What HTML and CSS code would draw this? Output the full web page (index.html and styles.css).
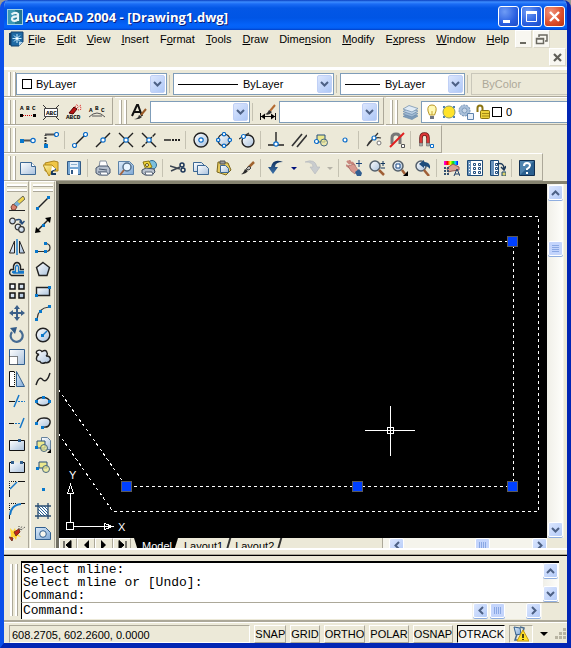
FILE: index.html
```html
<!DOCTYPE html>
<html lang="en">
<head>
<meta charset="utf-8">
<title>AutoCAD 2004 - [Drawing1.dwg]</title>
<link rel="stylesheet" href="styles.css">
</head>
<body>
<svg class="sprite" aria-hidden="true">
  <defs>
    <linearGradient id="ice" x1="0" y1="0" x2="1" y2="1"><stop offset="0" stop-color="#fff"/><stop offset="1" stop-color="#a9c1dc"/></linearGradient>
    <linearGradient id="sky" x1="0" y1="0" x2="1" y2="1"><stop offset="0" stop-color="#dcebfa"/><stop offset="1" stop-color="#7fa8d4"/></linearGradient>
    <linearGradient id="gold" x1="0" y1="0" x2="1" y2="1"><stop offset="0" stop-color="#fff6a8"/><stop offset="1" stop-color="#d8a820"/></linearGradient>
    <linearGradient id="navy" x1="0" y1="0" x2="0" y2="1"><stop offset="0" stop-color="#0f2f5c"/><stop offset="1" stop-color="#3d74ac"/></linearGradient>
    <linearGradient id="rainbow"><stop offset="0" stop-color="#f0f"/><stop offset=".25" stop-color="#f00"/><stop offset=".45" stop-color="#ff0"/><stop offset=".65" stop-color="#0d0"/><stop offset=".8" stop-color="#0df"/><stop offset="1" stop-color="#00f"/></linearGradient>
  </defs>
  <symbol id="down" viewBox="0 0 9 6"><path d="M1 1l3.5 3.500L8 1" fill="none" stroke="#4d6185" stroke-width="2"/></symbol>
  <symbol id="up" viewBox="0 0 9 6"><path d="M1 5l3.500-3.500L8 5" fill="none" stroke="#4d6185" stroke-width="2"/></symbol>
  <symbol id="left" viewBox="0 0 6 9"><path d="M5 1L1.500 4.500 5 8" fill="none" stroke="#4d6185" stroke-width="2"/></symbol>
  <symbol id="right" viewBox="0 0 6 9"><path d="M1 1l3.500 3.500L1 8" fill="none" stroke="#4d6185" stroke-width="2"/></symbol>

  <symbol id="app" viewBox="0 0 16 16"><rect width="16" height="16" fill="#9fd0e4"/><rect x="1" y="1" width="14" height="14" fill="#23768f"/><path d="M1 1h7v14H1z" fill="#3c98b4"/><path d="M4.500 5.500Q8 2.500 11 5v7M11 7.500Q4.500 7 5 10.500 6.500 13.500 11 10.500" fill="none" stroke="#e8f4f8" stroke-width="2.200"/></symbol>
  <symbol id="doc" viewBox="0 0 16 16"><path d="M1 2h3v12H1z" fill="#17395f"/><path d="M3 1h12v10l-4 4H3z" fill="#1f6aa5" stroke="#14406c"/><path d="M9 3v9M4.500 7.500h9M6 4.500l6 6M12 4.500l-6 6" stroke="#c8ecff"/><path d="M8 6.500h2v2H8z" fill="#fff"/><path d="M11 15v-4h4z" fill="#b8d8ee"/></symbol>

  <symbol id="text-style" viewBox="0 0 16 16"><path d="M1 12L6 1h1l4 11M3 8h6" fill="none" stroke="#111" stroke-width="2"/><path d="M15 5l-5 6" stroke="#9a5a28" stroke-width="2"/><path d="M3 15q4 0 5-4l3 2q-3 3-8 2z" fill="#333"/></symbol>
  <symbol id="dim-style" viewBox="0 0 16 16"><path d="M.5 9v7M15.500 9v7M1 12.500h14" stroke="#111"/><path d="M1 12.500l4-3v6zM15 12.500l-4-3v6z"/><path d="M15 1l-5 6" stroke="#b46a30" stroke-width="2"/><path d="M5 10q2 0 4-4l3 2q-3 4-7 2z" fill="#333"/></symbol>
  <symbol id="layers" viewBox="0 0 16 16"><g stroke="#6a89aa" stroke-width=".7"><path d="M7 9l9 3-6 3.500-9-3z" fill="#7d9cba"/><path d="M7 6.500l9 3-6 3.500-9-3z" fill="#a0bad3"/><path d="M7 4l9 3-6 3.500-9-3z" fill="#bfd3e6"/><path d="M7 1.500l9 3L10 8 1 5z" fill="#e0ebf5"/></g></symbol>
  <symbol id="bulb" viewBox="0 0 16 16"><path d="M5.500 11L4 7q-1-6 4-6t4 6l-1.500 4z" fill="#fff9b4" stroke="#b99624"/><path d="M6 12h4v3H6z" fill="#6e7482"/><path d="M8 11V7" stroke="#c9a835"/></symbol>
  <symbol id="sun" viewBox="0 0 16 16"><path d="M2 2h2v2H2zM12 2h2v2h-2zM2 12h2v2H2zM12 12h2v2h-2z" fill="#4a7fb8"/><circle cx="8" cy="8" r="6" fill="#ffe32a" stroke="#8e9a66"/></symbol>
  <symbol id="sun-vp" viewBox="0 0 16 16"><circle cx="6.500" cy="6.500" r="5.500" fill="#a9c0da" stroke="#6f90b5" stroke-dasharray="2 1"/><circle cx="6.500" cy="6.500" r="2.500" fill="#c6d6e8" stroke="#7f9cbc"/><path d="M9.500 9.500h6v6h-6z" fill="#e6eef8" stroke="#5d82ad"/></symbol>
  <symbol id="lock" viewBox="0 0 16 16"><path d="M2.500 8V4q0-2.500 2.500-2.500T7.500 4v3" fill="none" stroke="#8b7410" stroke-width="2"/><rect x="5.500" y="6.500" width="9" height="8" rx="1" fill="#edd139" stroke="#8b7410"/><path d="M7 9.500h7M7 12h7" stroke="#a48a16"/></symbol>

  <symbol id="track-point" viewBox="0 0 16 16"><path d="M2 8.500h9" stroke="#555" stroke-width="2"/><path d="M0 7h4v4H0z" class="blue"/><circle cx="13" cy="8.500" r="2.200" class="ring"/></symbol>
  <symbol id="snap-from" viewBox="0 0 16 16"><path d="M2.500 13V3" stroke="#333" stroke-width="2" stroke-dasharray="2 1"/><path d="M2 2.500h11" stroke="#555" stroke-width="2"/><path d="M1 12h4v4H1z" class="blue"/><circle cx="13.500" cy="2.500" r="2" class="ring"/></symbol>
  <symbol id="endpoint" viewBox="0 0 16 16"><path d="M3 13L13 3" class="ink"/><circle cx="13.500" cy="2.500" r="2" class="ring"/><circle cx="2.500" cy="13.500" r="2" class="ring"/></symbol>
  <symbol id="midpoint" viewBox="0 0 16 16"><path d="M1 15L15 1" class="ink"/><circle cx="8" cy="8" r="2.200" class="ring"/></symbol>
  <symbol id="intersect" viewBox="0 0 16 16"><path d="M1 1l14 14M1 15L15 1" class="ink"/><circle cx="8" cy="8" r="2.200" class="ring"/></symbol>
  <symbol id="apparent" viewBox="0 0 16 16"><path d="M1 1l14 14" class="ink"/><path d="M1 15L15 1" class="ink" stroke-dasharray="4 1"/><circle cx="8" cy="8" r="2.200" class="ring"/></symbol>
  <symbol id="extension" viewBox="0 0 16 16"><path d="M0 8h7" stroke="#222" stroke-width="1.500"/><path d="M8 8h8" stroke="#222" stroke-width="2" stroke-dasharray="2 1"/></symbol>
  <symbol id="center" viewBox="0 0 16 16"><circle cx="8" cy="8" r="7" fill="url(#ice)" class="ink"/><circle cx="8" cy="8" r="2.200" class="ring"/></symbol>
  <symbol id="quadrant" viewBox="0 0 16 16"><circle cx="8" cy="8" r="6" fill="url(#ice)" class="edge"/><g class="ring"><circle cx="8" cy="2.200" r="1.700"/><circle cx="8" cy="13.800" r="1.700"/><circle cx="2.200" cy="8" r="1.700"/><circle cx="13.800" cy="8" r="1.700"/></g></symbol>
  <symbol id="tangent" viewBox="0 0 16 16"><circle cx="9" cy="9" r="6" fill="url(#ice)" class="ink"/><path d="M0 7L10 1" class="edge"/><circle cx="4.500" cy="4.500" r="2" class="ring"/></symbol>
  <symbol id="perpendicular" viewBox="0 0 16 16"><path d="M8 0v10M0 13h16" class="ink"/><circle cx="8" cy="12" r="2.200" class="ring"/></symbol>
  <symbol id="parallel" viewBox="0 0 16 16"><path d="M1 14L11 2M6 15L16 3" stroke="#333" stroke-width="1.700"/></symbol>
  <symbol id="insert-snap" viewBox="0 0 16 16"><path d="M3 3h8v7H3z" fill="#ece88c" stroke="#264f7c"/><circle cx="10" cy="10.500" r="3.500" fill="#e9e596" fill-opacity=".7" stroke="#46677f"/><circle cx="2.500" cy="9.500" r="2" class="ring"/></symbol>
  <symbol id="node" viewBox="0 0 16 16"><circle cx="8" cy="8" r="2" class="ring"/></symbol>
  <symbol id="nearest" viewBox="0 0 16 16"><path d="M1 14L12 1M1 14q5-10 14-8" fill="none" class="edge"/><circle cx="8" cy="6" r="2" class="ring"/><circle cx="13" cy="11" r="2" fill="#fff" stroke="#777"/></symbol>
  <symbol id="snap-none" viewBox="0 0 16 16"><path d="M3 12V6q0-4 4-4t4 4v6" fill="none" stroke="#777" stroke-width="3"/><path d="M1 15L15 1" stroke="#e02020" stroke-width="2"/><path d="M12.500 12.500h3v3h-3z" fill="#fff" stroke="#555"/></symbol>
  <symbol id="magnet" viewBox="0 0 16 16"><path d="M3 11V6q0-4 3.500-4T10 6v5" fill="none" stroke="#651515" stroke-width="3.500"/><path d="M3 11V6q0-4 3.500-4T10 6v5" fill="none" stroke="#db3636" stroke-width="2"/><path d="M1.500 11h3v3h-3zM8.500 11h3v3h-3z" fill="#aaa" stroke="#555" stroke-width=".5"/><path d="M12.500 12.500h3v3h-3z" fill="#fff" stroke="#0a6cc8"/></symbol>

  <symbol id="new" viewBox="0 0 16 16"><path d="M.5 2.500h11l4 4v8H.5z" fill="url(#ice)" stroke="#3c6894"/><path d="M11.500 2.500v4h4" fill="#fff" stroke="#3c6894"/></symbol>
  <symbol id="open" viewBox="0 0 16 16"><path d="M2 3l9-2 4 1v9H2z" fill="#f0c645" stroke="#ad851d"/><path d="M0 5h9l3 3-6 8z" fill="url(#gold)" stroke="#b28a1d"/><path d="M13 14H9q-1-4 4-5" fill="none" stroke="#12365e" stroke-width="2"/><path d="M9 6l4 3-5 2z" fill="#fff"/></symbol>
  <symbol id="save" viewBox="0 0 16 16"><path d="M1.500 1.500h13v13h-13z" fill="#77a8d4" stroke="#315a86"/><path d="M4 2h8v5H4z" fill="#e8f1f9"/><path d="M5 4.500h6" stroke="#8fb2d0"/><path d="M4 9h8v6H4z" fill="#fff"/><path d="M5 10h2v4H5z" fill="#315a86"/></symbol>
  <symbol id="print" viewBox="0 0 16 16"><path d="M4 7l1-6h6l2 6z" fill="#fff" stroke="#8792a0"/><path d="M1 8l3-2h9l2 3v4l-3 2H4l-3-2z" fill="#b5bfcd" stroke="#47556a"/><path d="M4 9l8 1M3 12h9" stroke="#47556a"/><path d="M5 12h7l1 3H6z" fill="#fff" stroke="#6d7a8d"/></symbol>
  <symbol id="preview" viewBox="0 0 16 16"><path d="M.5 1.500h11l4 4v9H.5z" fill="url(#sky)" stroke="#5b82a8"/><circle cx="9" cy="7" r="4" fill="#e9f5ff" stroke="#526f8b" stroke-width="1.500"/><path d="M6 10l-4 5" stroke="#a26440" stroke-width="2"/></symbol>
  <symbol id="publish" viewBox="0 0 16 16"><circle cx="11" cy="5" r="4.500" fill="#7cc0dd" stroke="#2f6b94"/><path d="M2 2l6-1 3 6-6 3z" fill="#f4d83a" stroke="#8a7612"/><circle cx="6" cy="5" r="1.500" fill="#fff" stroke="#665500"/><path d="M1 10l4-2 8 1 1 3-3 3H4l-3-2z" fill="#b9c2ce" stroke="#434f60"/><path d="M4 12h7l1 3H5z" fill="#fff" stroke="#5c6878"/></symbol>
  <symbol id="cut" viewBox="0 0 16 16"><path d="M0 6l10 3M1 11l9-4" stroke="#3c4550" stroke-width="1.500"/><g fill="none" stroke="#1b3557" stroke-width="1.500"><circle cx="12" cy="5" r="2"/><circle cx="13" cy="10" r="2"/></g></symbol>
  <symbol id="copy" viewBox="0 0 16 16"><path d="M.5 2.500h8l3 3v6H.5z" fill="url(#ice)" stroke="#3c6894"/><path d="M4.500 5.500h8l3 3v6h-11z" fill="url(#ice)" stroke="#3c6894"/></symbol>
  <symbol id="paste" viewBox="0 0 16 16"><path d="M2 2l10 1 3 7-5 5-9-3z" fill="#e4c95e" stroke="#7a661c"/><path d="M4 1h5v3H4z" fill="#999" stroke="#555"/><path d="M4.500 5.500h5l3 3v4h-8z" fill="url(#ice)" stroke="#3c6894"/></symbol>
  <symbol id="match" viewBox="0 0 16 16"><path d="M15 2L9 8" stroke="#a0632f" stroke-width="2.500"/><path d="M10 6l2 2-2 2-3-1z" fill="#bbb" stroke="#444"/><path d="M2 14q2 0 4-5l3 2q-3 4-7 3z" fill="#2a2a2a"/></symbol>
  <symbol id="undo" viewBox="0 0 16 16"><path d="M15 2Q5-2 3 7H0l5 7 5-7H7q0-5 8-5z" fill="url(#navy)"/></symbol>
  <symbol id="redo" viewBox="0 0 16 16"><path d="M1 2q10-4 12 5h3l-5 7-5-7h3q0-5-8-5z" fill="#c9ccce" stroke="#aeb3b8" stroke-width=".5"/></symbol>
  <symbol id="pan" viewBox="0 0 16 16"><path d="M1 1l3 3M3 0l3 4M0 5l4 3M6 2l3 4" stroke="#c8877d" stroke-width="2"/><path d="M2 6l6-2 4 6-3 4-4-3z" fill="#d89a90" stroke="#9b5d58" stroke-width=".6"/><path d="M9 12l4-3 3 4-1 3h-4z" fill="#315e90"/><path d="M13 0v7M10 3.500h6" stroke="#1e477a"/></symbol>
  <symbol id="zoom-rt" viewBox="0 0 16 16"><circle cx="6" cy="6" r="5" fill="url(#ice)" stroke="#54606b" stroke-width="1.500"/><path d="M10 10l5 5" stroke="#a05f36" stroke-width="2.500"/><path d="M14 1v5M11.500 3.500H16M11.500 8H16" stroke="#12365e"/></symbol>
  <symbol id="zoom-win" viewBox="0 0 16 16"><circle cx="6" cy="6" r="5" fill="url(#ice)" stroke="#54606b" stroke-width="1.500"/><path d="M4 4h4v4H4z" fill="#fff" stroke="#1a4b86"/><path d="M10 10l3 4" stroke="#a05f36" stroke-width="2.500"/><path d="M16 11v5h-5z"/></symbol>
  <symbol id="zoom-prev" viewBox="0 0 16 16"><circle cx="6" cy="6" r="5" fill="url(#ice)" stroke="#54606b" stroke-width="1.500"/><path d="M9 10l5 6" stroke="#a05f36" stroke-width="2.500"/><path d="M15 9q1-7-6-7V0L4 4l5 4V6q4 0 6 3z" fill="#1d4c7c"/></symbol>
  <symbol id="properties" viewBox="0 0 16 16"><path d="M0 1h14v4H0z" fill="url(#rainbow)"/><path d="M3 8l6-4 6 3v3l-7 1-4 1z" fill="#d7a091" stroke="#94564d"/><path d="M0 8h6M0 11h6M0 14h6" stroke="#34506f" stroke-width="2" stroke-dasharray="2 1"/><path d="M10 16l3-7 3 7M11 14h4" fill="none" stroke="#1e3c66"/></symbol>
  <symbol id="design" viewBox="0 0 16 16"><path d="M.5.5h15v15H.5z" fill="#fff" stroke="#1d4a78"/><path d="M1 1h3v14H1z" fill="#6992bb"/><path d="M2.500 3v11" stroke="#fff" stroke-dasharray="1 2"/><g fill="#fff" stroke="#204c7c"><path d="M6.500 3.500h2v2h-2zM11.500 3.500h2v2h-2zM6.500 7.500h2v2h-2zM11.500 7.500h2v2h-2zM6.500 11.500h2v2h-2zM11.500 11.500h2v2h-2z"/></g></symbol>
  <symbol id="palettes" viewBox="0 0 16 16"><path d="M.5.5h8v15h-8z" fill="#fff" stroke="#1d4a78"/><path d="M1 1h3v14H1z" fill="#6992bb"/><path d="M5.500 3.500h2v2h-2zM5.500 7.500h2v2h-2zM5.500 11.500h2v2h-2z" fill="#fff" stroke="#204c7c"/><path d="M7 4q7-2 7 5M11 7l3 3 2-4" fill="none" stroke="#1d3959" stroke-width="1.500"/><path d="M12 12h4v4h-4z" fill="#ddd36c" stroke="#1d4a78"/></symbol>
  <symbol id="help" viewBox="0 0 16 16"><path d="M.5.5h15v15H.5z" fill="#2b608f" stroke="#102f51"/><path d="M1 1h14L1 15z" fill="#4f83ae"/><path d="M5 6q0-3 3-3t3 2.500Q11 7 8 9v1" fill="none" stroke="#fff" stroke-width="2"/><path d="M7 12h2v2H7z" fill="#fff"/></symbol>

  <symbol id="erase" viewBox="0 0 16 16"><path d="M14 1l2 3-8 7-3-2z" fill="#f0d44b" stroke="#665"/><path d="M8 6l3 3-3 3-3-3z" fill="#7aafd4"/><path d="M4 9l4 3-2 3H3l-1-3z" fill="#dc806b" stroke="#7b4434"/><path d="M0 15.500h16" stroke="#222"/></symbol>
  <symbol id="copy-obj" viewBox="0 0 16 16"><g fill="url(#ice)" class="edge"><circle cx="3.500" cy="4" r="2.800"/><circle cx="9" cy="10" r="2.800"/><circle cx="12.500" cy="12.500" r="2.800"/></g><path d="M7 3q5-2 6 3M10.500 4.500L13 7l2.500-3" fill="none" stroke="#264b7a" stroke-width="1.500"/></symbol>
  <symbol id="mirror" viewBox="0 0 16 16"><path d="M5.500 2v12H.5zM10.500 2v12h5z" fill="url(#ice)" stroke="#222"/><path d="M8 0v16" stroke="#1577c8" stroke-width="1.400"/></symbol>
  <symbol id="offset" viewBox="0 0 16 16"><path d="M15 14.500H2.500Q-1 12 2 8.500h2.500V5Q5.500 1.500 8 1.500T11.500 5v3.500H15" fill="none" class="ink"/><path d="M15 12H4.500q-2-1 0-1.500h2V6Q8 2.500 9.500 6v4.500H15" fill="none" stroke="#1577c8" stroke-width="1.300"/></symbol>
  <symbol id="array" viewBox="0 0 16 16"><path d="M1 1h5v5H1zM10 1h5v5h-5zM1 10h5v5H1zM10 10h5v5h-5z" fill="url(#ice)" stroke="#111" stroke-width="1.500"/></symbol>
  <symbol id="move" viewBox="0 0 16 16"><path d="M8 0l3 4H9v3h3V5l4 3-4 3V9H9v3h2l-3 4-3-4h2V9H4v2L0 8l4-3v2h3V4H5z" fill="#3b5f88"/></symbol>
  <symbol id="rotate" viewBox="0 0 16 16"><path d="M10.500 3.500A6 6 0 1 1 3 5" fill="none" stroke="#466b92" stroke-width="2.200"/><path d="M1 1l7-1-2 7z" fill="#315a86"/></symbol>
  <symbol id="scale" viewBox="0 0 16 16"><path d="M.5.500h15v15H.5z" fill="url(#ice)" stroke="#315f8f"/><path d="M.5 7.500h8v8h-8z" fill="#fff" stroke="#111" stroke-dasharray="1 1"/></symbol>
  <symbol id="stretch" viewBox="0 0 16 16"><path d="M7.500.500l8 15h-8z" fill="url(#sky)" stroke="#315f8f"/><path d="M5.500.500h-5v15h5" fill="#fff" stroke="#111"/><path d="M5.500 1v15" stroke="#111" stroke-dasharray="1 1"/></symbol>
  <symbol id="trim" viewBox="0 0 16 16"><path d="M0 8.500h6" stroke="#111"/><path d="M9 8.500h7" stroke="#1577c8" stroke-dasharray="2 1"/><path d="M5 14l5-12" stroke="#1577c8" stroke-width="1.500"/></symbol>
  <symbol id="extend" viewBox="0 0 16 16"><path d="M0 8.500h5" stroke="#111"/><path d="M6 8.500h6" stroke="#1577c8" stroke-dasharray="2 1"/><path d="M11 13l4-10" stroke="#1577c8" stroke-width="1.500"/></symbol>
  <symbol id="break-pt" viewBox="0 0 16 16"><path d="M.5 3.500h15v10H.5z" fill="url(#ice)" stroke="#111"/><path d="M9 2h3v3H9z" fill="#315f8f"/></symbol>
  <symbol id="break" viewBox="0 0 16 16"><path d="M.5 3.500h15v10H.5z" fill="url(#ice)"/><path d="M3 3.500H.5v10h15v-10H13" fill="none" stroke="#111"/><path d="M2 2h3v3H2zM11 2h3v3h-3z" fill="#315f8f"/></symbol>
  <symbol id="chamfer" viewBox="0 0 16 16"><path d="M.5 7V.5H8" fill="none" stroke="#111" stroke-dasharray="1 1"/><path d="M9 .5h7M.5 9v7" stroke="#111"/><path d="M1 8l7-7" stroke="#1577c8" stroke-width="1.500"/></symbol>
  <symbol id="fillet" viewBox="0 0 16 16"><path d="M.5 7V.5H8" fill="none" stroke="#111" stroke-dasharray="1 1"/><path d="M12 .5h4M.5 12v4" stroke="#111"/><path d="M1 12Q2 2 12 1" fill="none" stroke="#1577c8" stroke-width="2"/></symbol>
  <symbol id="explode" viewBox="0 0 16 16"><path d="M11 5l2-4M12 5l4-3M10 4V1" stroke="#444" stroke-dasharray="1 1"/><path d="M1 3l3 3 2-3 1 4 4-1-2 3 3 3-4-1-1 4-2-3-4 2 1-4z" fill="#ffd632"/><path d="M0 12l4 1-1 3zM5 7l5-3 1 3-4 4z" fill="#c42818" stroke="#732"/></symbol>
  <symbol id="line" viewBox="0 0 16 16"><path d="M3 13L13 3" class="ink"/><path d="M12 1h3v3h-3zM1 12h3v3H1z" class="blue"/></symbol>
  <symbol id="xline" viewBox="0 0 16 16"><path d="M3 13L13 3" class="ink"/><path d="M16 0l-1 6-5-5zM0 16l1-6 5 5z"/><path d="M7 7h3v3H7z" class="blue"/></symbol>
  <symbol id="pline" viewBox="0 0 16 16"><path d="M2 12.500h8M10 4.500q5 0 5 4t-4 4" fill="none" class="edge"/><path d="M0 11h3v3H0zM9 11h3v3H9zM9 3h3v3H9z" class="blue"/></symbol>
  <symbol id="polygon" viewBox="0 0 16 16"><path d="M8 1.500l6.500 5-2.500 8H4l-2.500-8z" fill="url(#ice)" class="ink"/></symbol>
  <symbol id="rect" viewBox="0 0 16 16"><path d="M1.500 4.500h13v8h-13z" fill="url(#ice)" class="ink"/><path d="M13 3h3v3h-3zM0 11h3v3H0z" class="blue"/></symbol>
  <symbol id="arc" viewBox="0 0 16 16"><path d="M2 14Q3 3 14 2" fill="none" class="edge"/><path d="M0 13h3v3H0zM4 5h3v3H4zM13 0h3v3h-3z" class="blue"/></symbol>
  <symbol id="circle" viewBox="0 0 16 16"><circle cx="8" cy="8" r="6.800" fill="url(#ice)" class="ink"/><path d="M8 8l4-4" stroke="#1577c8" stroke-width="1.500"/><path d="M6 7h3v3H6z" class="blue"/></symbol>
  <symbol id="revcloud" viewBox="0 0 16 16"><path d="M4 5.500q-4-1-2-3.500 3-2 5 .5 4-2.500 5 1 1 2.500-1 3.500 4-.5 4.500 3.500-1.500 4-5 3-4 2-5.500-1-4 0-3.500-3.500.5-3 2.500-3.500z" fill="url(#ice)" class="ink"/></symbol>
  <symbol id="spline" viewBox="0 0 16 16"><path d="M1 14Q4 4 8 9q4 3 7-7" fill="none" class="ink"/></symbol>
  <symbol id="ellipse" viewBox="0 0 16 16"><ellipse cx="8" cy="8.500" rx="6.500" ry="4" fill="url(#ice)" class="ink"/><path d="M7 3h3v3H7zM0 7h3v3H0zM13 7h3v3h-3z" class="blue"/></symbol>
  <symbol id="ellipse-arc" viewBox="0 0 16 16"><path d="M2 9q0-6 7-6t6 5q-1 5-7 4" fill="url(#ice)" class="ink"/><path d="M0 7h3v3H0zM6 11h3v3H6z" class="blue"/></symbol>
  <symbol id="insert-block" viewBox="0 0 16 16"><path d="M6.500.500h6l3 3v9h-9z" fill="url(#ice)" stroke="#66839e"/><path d="M2 4h8v7H2z" fill="#ece88c" stroke="#264f7c"/><circle cx="9" cy="11" r="3.500" fill="#ece88c" fill-opacity=".7" stroke="#46677f"/><path d="M0 9h3v3H0z" class="blue"/><path d="M16 12v4h-4z"/></symbol>
  <symbol id="make-block" viewBox="0 0 16 16"><path d="M4 3h8v6H4z" fill="#ece88c" stroke="#264f7c"/><circle cx="11" cy="10" r="3.500" fill="#ece88c" fill-opacity=".7" stroke="#46677f"/><path d="M1 8h3v3H1z" class="blue"/></symbol>
  <symbol id="point" viewBox="0 0 16 16"><path d="M7 7h3v3H7z" class="blue"/></symbol>
  <symbol id="hatch" viewBox="0 0 16 16"><path d="M3 3h10v10H3z" fill="#fff"/><path d="M3 3l10 10M3 6l7 7M3 9l4 4M6 3l7 7M9 3l4 4" stroke="#2c6497"/><path d="M3 0v16M13 0v16M0 3h16M0 13h16" stroke="#274c72" stroke-width="1.300"/></symbol>
  <symbol id="region" viewBox="0 0 16 16"><path d="M.5 2.500h10l5 5v7H.5z" fill="url(#sky)" stroke="#315f8f"/><circle cx="8" cy="9" r="3.300" fill="#f5f5ed" stroke="#315f8f"/></symbol>
  <symbol id="mtext" viewBox="0 0 16 16"><path d="M8 3l5 12H3z"/></symbol>
  <symbol id="satellite" viewBox="0 0 16 16"><path d="M1 1l6 1 1 6-5 1z" fill="url(#sky)" stroke="#345f8c"/><path d="M7 1l4 1-1 4M4 8l-2 6h5" fill="none" stroke="#47698b" stroke-width="1.500"/><path d="M10 4l6 11H4z" fill="#ffe22a" stroke="#c79a12"/><path d="M10 8v4M10 13v1" stroke="#111" stroke-width="1.500"/></symbol>
</svg>

<div class="window">
  <header class="title">
    <svg class="icon"><use href="#app"/></svg>
    <h1>AutoCAD 2004 - [Drawing1.dwg]</h1>
    <button class="cap" aria-label="Minimize"><svg viewBox="0 0 19 19"><path d="M4 13h7v3H4z" fill="#fff"/></svg></button>
    <button class="cap" aria-label="Maximize"><svg viewBox="0 0 19 19"><path d="M4.500 4.500h10v10h-10z" fill="none" stroke="#fff"/><path d="M4 4h11v3H4z" fill="#fff"/></svg></button>
    <button class="cap close" aria-label="Close"><svg viewBox="0 0 19 19"><path d="M5 5l9 9M14 5l-9 9" stroke="#fff" stroke-width="2.400"/></svg></button>
  </header>

  <nav class="menu">
    <svg class="icon"><use href="#doc"/></svg>
    <a href="#"><u>F</u>ile</a><a href="#"><u>E</u>dit</a><a href="#"><u>V</u>iew</a><a href="#"><u>I</u>nsert</a><a href="#">F<u>o</u>rmat</a><a href="#"><u>T</u>ools</a><a href="#"><u>D</u>raw</a><a href="#">Dime<u>n</u>sion</a><a href="#"><u>M</u>odify</a><a href="#">E<u>x</u>press</a><a href="#"><u>W</u>indow</a><a href="#"><u>H</u>elp</a>
    <span class="mdi">
      <button aria-label="Minimize drawing"><svg viewBox="0 0 15 15"><path d="M4 10h6v2H4z" fill="#6b6a62"/></svg></button>
      <button aria-label="Restore drawing"><svg viewBox="0 0 15 15"><path d="M5 5V3h8v6h-2" fill="none" stroke="#6b6a62" stroke-width="1.500"/><path d="M2.500 6.500h7v5h-7zM2 7h8" fill="none" stroke="#6b6a62" stroke-width="1.500"/></svg></button>
    </span>
    <span class="mdi last"><button aria-label="Close drawing"><svg viewBox="0 0 15 15"><path d="M4 4l7 7M11 4l-7 7" stroke="#5f5e57" stroke-width="2.200"/></svg></button></span>
  </nav>

  <div class="row">
    <div class="bar fill">
      <i class="grip"></i>
      <span class="combo wide"><select class="after-box" aria-label="Color"><option>ByLayer</option></select><i class="box"></i><span class="arrow"><svg><use href="#down"/></svg></span></span>
      <i class="sep"></i>
      <span class="combo wider"><select class="after-long" aria-label="Linetype"><option>ByLayer</option></select><i class="stroke long"></i><span class="arrow"><svg><use href="#down"/></svg></span></span>
      <i class="sep"></i>
      <span class="combo medium"><select class="after-short" aria-label="Lineweight"><option>ByLayer</option></select><i class="stroke short"></i><span class="arrow"><svg><use href="#down"/></svg></span></span>
      <i class="sep"></i>
      <span class="combo grow off"><select disabled aria-label="Plot style"><option>ByColor</option></select></span>
    </div>
  </div>

  <div class="row">
    <div class="bar">
      <i class="grip"></i>
      <button class="tool" aria-label="Find text"><svg class="icon" viewBox="0 0 16 16"><text x="0" y="6" class="micro">A</text><text x="6" y="6" class="micro">B</text><text x="12" y="6" class="micro">C</text><path d="M3 11.500h10" stroke="#c00" stroke-dasharray="1 1"/><path d="M0 10h3v3H0zM13 10h3v3h-3z"/></svg></button>
      <button class="tool" aria-label="Text fit"><svg class="icon" viewBox="0 0 16 16"><path d="M1.500 4.500h13v8h-13z" fill="#fff" stroke="#444"/><text x="3" y="11" class="micro">ABC</text><path d="M0 1l3 3M16 1l-3 3M0 16l3-3M16 16l-3-3" stroke="#333"/></svg></button>
      <button class="tool" aria-label="Explode text"><svg class="icon" viewBox="0 0 16 16"><text x="0" y="15" class="micro">ABCD</text><path d="M3 9l5-6 3 2-4 5z" fill="#b81414" stroke="#500"/><path d="M9 3l2-3M11 4l4-3M12 6l4-1M11 1l1 1M14 3l2 1" stroke="#d22" stroke-dasharray="1 1"/></svg></button>
      <button class="tool" aria-label="Arc text"><svg class="icon" viewBox="0 0 16 16"><text x="0" y="8" class="micro">A</text><text x="6" y="6" class="micro">B</text><text x="12" y="8" class="micro">C</text><path d="M0 13q8-8 16 0M3 12h10" fill="none" stroke="#555"/></svg></button>
    </div>
    <div class="bar">
      <i class="grip"></i>
      <button class="tool" title="Text style"><svg class="icon"><use href="#text-style"/></svg></button>
      <span class="combo narrow"><select aria-label="Text style"><option></option></select><span class="arrow"><svg><use href="#down"/></svg></span></span>
      <i class="sep"></i>
      <button class="tool" title="Dimension style"><svg class="icon"><use href="#dim-style"/></svg></button>
      <span class="combo narrow"><select aria-label="Dimension style"><option></option></select><span class="arrow"><svg><use href="#down"/></svg></span></span>
    </div>
    <div class="bar fill">
      <i class="grip"></i>
      <button class="tool" title="Layer properties"><svg class="icon"><use href="#layers"/></svg></button>
      <span class="combo grow"><select class="after-layer" aria-label="Layer"><option>0</option></select><span class="layer-state"><svg class="icon"><use href="#bulb"/></svg><svg class="icon"><use href="#sun"/></svg><svg class="icon"><use href="#sun-vp"/></svg><svg class="icon"><use href="#lock"/></svg><i class="chip"></i></span></span>
    </div>
  </div>

  <div class="row">
    <div class="bar">
      <i class="grip"></i>
      <button class="tool" title="Temporary track point"><svg class="icon"><use href="#track-point"/></svg></button>
      <button class="tool" title="Snap from"><svg class="icon"><use href="#snap-from"/></svg></button>
      <i class="sep"></i>
      <button class="tool" title="Endpoint"><svg class="icon"><use href="#endpoint"/></svg></button>
      <button class="tool" title="Midpoint"><svg class="icon"><use href="#midpoint"/></svg></button>
      <button class="tool" title="Intersection"><svg class="icon"><use href="#intersect"/></svg></button>
      <button class="tool" title="Apparent intersection"><svg class="icon"><use href="#apparent"/></svg></button>
      <button class="tool" title="Extension"><svg class="icon"><use href="#extension"/></svg></button>
      <i class="sep"></i>
      <button class="tool" title="Center"><svg class="icon"><use href="#center"/></svg></button>
      <button class="tool" title="Quadrant"><svg class="icon"><use href="#quadrant"/></svg></button>
      <button class="tool" title="Tangent"><svg class="icon"><use href="#tangent"/></svg></button>
      <i class="sep"></i>
      <button class="tool" title="Perpendicular"><svg class="icon"><use href="#perpendicular"/></svg></button>
      <button class="tool" title="Parallel"><svg class="icon"><use href="#parallel"/></svg></button>
      <button class="tool" title="Insertion"><svg class="icon"><use href="#insert-snap"/></svg></button>
      <button class="tool" title="Node"><svg class="icon"><use href="#node"/></svg></button>
      <i class="sep"></i>
      <button class="tool" title="Nearest"><svg class="icon"><use href="#nearest"/></svg></button>
      <button class="tool" title="No snap"><svg class="icon"><use href="#snap-none"/></svg></button>
      <i class="sep"></i>
      <button class="tool" title="Snap settings"><svg class="icon"><use href="#magnet"/></svg></button>
    </div>
  </div>

  <div class="row">
    <div class="bar">
      <i class="grip"></i>
      <button class="tool" title="New"><svg class="icon"><use href="#new"/></svg></button>
      <button class="tool" title="Open"><svg class="icon"><use href="#open"/></svg></button>
      <button class="tool" title="Save"><svg class="icon"><use href="#save"/></svg></button>
      <i class="sep"></i>
      <button class="tool" title="Plot"><svg class="icon"><use href="#print"/></svg></button>
      <button class="tool" title="Preview"><svg class="icon"><use href="#preview"/></svg></button>
      <button class="tool" title="Publish"><svg class="icon"><use href="#publish"/></svg></button>
      <i class="sep"></i>
      <button class="tool" title="Cut"><svg class="icon"><use href="#cut"/></svg></button>
      <button class="tool" title="Copy"><svg class="icon"><use href="#copy"/></svg></button>
      <button class="tool" title="Paste"><svg class="icon"><use href="#paste"/></svg></button>
      <button class="tool" title="Match properties"><svg class="icon"><use href="#match"/></svg></button>
      <i class="sep"></i>
      <button class="tool" title="Undo"><svg class="icon"><use href="#undo"/></svg></button>
      <button class="drop" title="Undo list"></button>
      <button class="tool" title="Redo" disabled><svg class="icon"><use href="#redo"/></svg></button>
      <button class="drop" title="Redo list" disabled></button>
      <i class="sep"></i>
      <button class="tool" title="Pan"><svg class="icon"><use href="#pan"/></svg></button>
      <button class="tool" title="Zoom realtime"><svg class="icon"><use href="#zoom-rt"/></svg></button>
      <button class="tool" title="Zoom window"><svg class="icon"><use href="#zoom-win"/></svg></button>
      <button class="tool" title="Zoom previous"><svg class="icon"><use href="#zoom-prev"/></svg></button>
      <i class="sep"></i>
      <button class="tool" title="Properties"><svg class="icon"><use href="#properties"/></svg></button>
      <button class="tool" title="Design center"><svg class="icon"><use href="#design"/></svg></button>
      <button class="tool" title="Tool palettes"><svg class="icon"><use href="#palettes"/></svg></button>
      <i class="sep"></i>
      <button class="tool" title="Help"><svg class="icon"><use href="#help"/></svg></button>
    </div>
  </div>

  <main class="work">
    <div class="side">
      <i class="hgrip"></i>
      <button title="Erase"><svg class="icon"><use href="#erase"/></svg></button>
      <button title="Copy object"><svg class="icon"><use href="#copy-obj"/></svg></button>
      <button title="Mirror"><svg class="icon"><use href="#mirror"/></svg></button>
      <button title="Offset"><svg class="icon"><use href="#offset"/></svg></button>
      <button title="Array"><svg class="icon"><use href="#array"/></svg></button>
      <button title="Move"><svg class="icon"><use href="#move"/></svg></button>
      <button title="Rotate"><svg class="icon"><use href="#rotate"/></svg></button>
      <button title="Scale"><svg class="icon"><use href="#scale"/></svg></button>
      <button title="Stretch"><svg class="icon"><use href="#stretch"/></svg></button>
      <button title="Trim"><svg class="icon"><use href="#trim"/></svg></button>
      <button title="Extend"><svg class="icon"><use href="#extend"/></svg></button>
      <button title="Break at point"><svg class="icon"><use href="#break-pt"/></svg></button>
      <button title="Break"><svg class="icon"><use href="#break"/></svg></button>
      <button title="Chamfer"><svg class="icon"><use href="#chamfer"/></svg></button>
      <button title="Fillet"><svg class="icon"><use href="#fillet"/></svg></button>
      <button title="Explode"><svg class="icon"><use href="#explode"/></svg></button>
    </div>
    <div class="side">
      <i class="hgrip"></i>
      <button title="Line"><svg class="icon"><use href="#line"/></svg></button>
      <button title="Construction line"><svg class="icon"><use href="#xline"/></svg></button>
      <button title="Polyline"><svg class="icon"><use href="#pline"/></svg></button>
      <button title="Polygon"><svg class="icon"><use href="#polygon"/></svg></button>
      <button title="Rectangle"><svg class="icon"><use href="#rect"/></svg></button>
      <button title="Arc"><svg class="icon"><use href="#arc"/></svg></button>
      <button title="Circle"><svg class="icon"><use href="#circle"/></svg></button>
      <button title="Revision cloud"><svg class="icon"><use href="#revcloud"/></svg></button>
      <button title="Spline"><svg class="icon"><use href="#spline"/></svg></button>
      <button title="Ellipse"><svg class="icon"><use href="#ellipse"/></svg></button>
      <button title="Ellipse arc"><svg class="icon"><use href="#ellipse-arc"/></svg></button>
      <button title="Insert block"><svg class="icon"><use href="#insert-block"/></svg></button>
      <button title="Make block"><svg class="icon"><use href="#make-block"/></svg></button>
      <button title="Point"><svg class="icon"><use href="#point"/></svg></button>
      <button title="Hatch"><svg class="icon"><use href="#hatch"/></svg></button>
      <button title="Region"><svg class="icon"><use href="#region"/></svg></button>
      <button title="Multiline text"><svg class="icon"><use href="#mtext"/></svg></button>
    </div>

    <section class="view">
      <div class="model">
        <svg class="canvas" role="img" aria-label="Model space">
          <g fill="none" stroke="#fff" stroke-dasharray="3 3" shape-rendering="crispEdges">
            <path d="M14 32.500h465.500v295H54L0 250.500"/>
            <path d="M14 57.500h440.500v245H67.500L0 206.500"/>
          </g>
          <g fill="#0040ff" stroke="#5a5a5a" shape-rendering="crispEdges">
            <path d="M448.500 52.500h10v10h-10zM448.500 297.500h10v10h-10zM293.500 297.500h10v10h-10zM62.500 297.500h10v10h-10z"/>
          </g>
          <path d="M306 246.500h50M331.500 222v50M328.500 243.500h6v6h-6z" fill="none" stroke="#fff" shape-rendering="crispEdges"/>
          <g fill="none" stroke="#fff" shape-rendering="crispEdges"><path d="M7.500 338.500h7v7h-7zM11.500 338v-28M15 342.500h38"/><path d="M11.500 300.500l3 9h-6zM53.500 342.500l-8-3v6z"/></g>
          <text x="10" y="295" class="axis">Y</text><text x="59" y="347" class="axis">X</text>
        </svg>
        <div class="vscroll">
          <button class="sb" aria-label="Scroll up"><svg class="ud"><use href="#up"/></svg></button>
          <span class="before"></span><i class="sb thumb"></i><span class="after"></span>
          <button class="sb" aria-label="Scroll down"><svg class="ud"><use href="#down"/></svg></button>
        </div>
      </div>
      <div class="tabs">
        <button class="nav" aria-label="First tab"><svg viewBox="0 0 12 12"><path d="M2 2v8M9 1.500L4 6l5 4.500z" stroke="#000"/></svg></button>
        <button class="nav" aria-label="Previous tab"><svg viewBox="0 0 12 12"><path d="M9 1L4 6l5 5z"/></svg></button>
        <button class="nav" aria-label="Next tab"><svg viewBox="0 0 12 12"><path d="M3 1l5 5-5 5z"/></svg></button>
        <button class="nav" aria-label="Last tab"><svg viewBox="0 0 12 12"><path d="M3 1.500L8 6l-5 4.500zM10 2v8" stroke="#000"/></svg></button>
        <button class="tab on">Model</button><button class="tab">Layout1</button><button class="tab">Layout2</button>
        <div class="hscroll">
          <button class="sb" aria-label="Scroll left"><svg class="lr"><use href="#left"/></svg></button>
          <span class="long-run"></span><i class="sb thumb across"></i><span class="short-run"></span>
          <button class="sb" aria-label="Scroll right"><svg class="lr"><use href="#right"/></svg></button>
        </div>
      </div>
    </section>
  </main>

  <section class="command">
    <i class="grip tall"></i>
    <div class="console">
      <div class="history">
        <pre>Select mline:
Select mline or [Undo]:
Command:</pre>
        <div class="vscroll">
          <button class="sb" aria-label="History up"><svg class="ud"><use href="#up"/></svg></button>
          <span class="after"></span>
          <button class="sb" aria-label="History down"><svg class="ud"><use href="#down"/></svg></button>
        </div>
      </div>
      <div class="entry">
        <input value="Command:" aria-label="Command line">
        <div class="hscroll">
          <button class="sb" aria-label="Line left"><svg class="lr"><use href="#left"/></svg></button>
          <i class="sb thumb across"></i><span class="long-run"></span>
          <button class="sb" aria-label="Line right"><svg class="lr"><use href="#right"/></svg></button>
        </div>
      </div>
    </div>
  </section>

  <footer class="status">
    <output>608.2705, 602.2600, 0.0000</output>
    <button>SNAP</button><button>GRID</button><button>ORTHO</button><button>POLAR</button><button>OSNAP</button><button class="on">OTRACK</button>
    <span class="tray"><svg class="icon"><use href="#satellite"/></svg></span>
    <button class="drop dark" aria-label="Status bar menu"></button>
    <svg class="size" viewBox="0 0 12 12"><path d="M8 0h3v3H8zM4 4h3v3H4zM8 4h3v3H8zM0 8h3v3H0zM4 8h3v3H4zM8 8h3v3H8z" fill="#b8b4a2"/></svg>
  </footer>
</div>
</body>
</html>
```
FILE: styles.css
```css
* { box-sizing: border-box; }
:root {
  --face: #ece9d8;
  --shade: #aca899;
  --edge: #7f9db9;
}
body { margin: 0; background: #9a9a94; font: 11px/14px "Liberation Sans", Arial, sans-serif; color: #000; }
button { margin: 0; padding: 0; border: 0; background: none; font: inherit; color: inherit; flex: none; display: flex; align-items: center; justify-content: center; }
svg { display: block; }
i { display: block; flex: none; }
.sprite { position: absolute; width: 0; height: 0; }
.icon { width: 16px; height: 16px; flex: none; overflow: visible; }
.ink { stroke: #222; stroke-width: 1.4px; }
.edge { stroke: #333; stroke-width: 1.2px; }
.ring { fill: #fff; stroke: #0a6cc8; stroke-width: 1.2px; }
.blue { fill: #0878cc; }
.micro { font: bold 6px "Liberation Mono", monospace; fill: #000; }

.window {
  height: 100vh; display: flex; flex-direction: column; overflow: hidden;
  background: var(--face); border: solid #0a47e0; border-width: 0 4px 5px;
  border-left-color: #0b50ea; border-right-color: #0226b4; border-bottom-color: #0226b4;
  border-radius: 8px 8px 0 0;
}

.title {
  height: 30px; flex: none; display: flex; align-items: center; gap: 2px; padding: 3px 2px 0 3px;
  background: linear-gradient(#0a3fc0 0, #3c8cff 2px, #1b6cf5 4px, #0357e6 8px, #0055e5 18px, #0463fa 25px, #0360f5 28px, #0140c8 30px);
}
.title h1 { flex: 1; margin: 0; font: bold 13px/18px "Open Sans", "Noto Sans", sans-serif; color: #fff; text-shadow: 1px 1px #0a1e7c; white-space: nowrap; }
.cap { width: 21px; height: 21px; border: 1px solid #fff; border-radius: 3px; background: radial-gradient(circle at 30% 25%, #6f9cf5, #2a5fe0 60%, #1b4bc4); }
.cap svg { width: 19px; height: 19px; }
.close { background: radial-gradient(circle at 30% 25%, #f0937c, #dc4c28 60%, #b93412); }

.menu { flex: none; height: 39px; display: flex; flex-wrap: wrap; align-content: flex-start; align-items: center; column-gap: 11px; padding: 0 0 0 4px; border-bottom: 2px solid #fff; }
.menu a { color: #000; text-decoration: none; line-height: 18px; }
.menu .icon { margin-right: -7px; }
.mdi { display: flex; gap: 1px; margin-left: -5px; }
.mdi.last { margin-left: auto; margin-right: 1px; }
.mdi button { width: 17px; height: 18px; background: #f8f7f1; border: 1px solid #fff; border-right-color: #dad7c8; border-bottom-color: #dad7c8; }
.mdi svg { width: 15px; height: 15px; }

.row { flex: none; height: 28px; display: flex; }
.bar { flex: none; display: flex; align-items: center; padding: 2px 4px 0; border: solid #fff; border-width: 1px 1px 1px 0; border-right-color: var(--shade); border-bottom-color: var(--shade); margin-right: 2px; }
.bar.fill { flex: 1; min-width: 0; padding-right: 0; margin-right: 0; border-right: 0; }
.grip { width: 7px; height: 24px; margin-right: 1px; border: solid #fff; border-width: 0 2px; box-shadow: 1px 0 var(--shade), inset -1px 0 var(--face); background: linear-gradient(90deg, var(--shade) 1px, transparent 1px); }
.sep { width: 1px; height: 18px; margin: 0 3px 0 2px; background: #c5c2b2; }
.tool { width: 23px; height: 22px; }
.drop { width: 13px; height: 22px; }
.drop::before { content: ""; border: solid transparent; border-width: 3px 3px 0; border-top-color: #00107c; }
.drop:disabled::before { border-top-color: #b5b3a8; }

.combo { position: relative; flex: none; height: 22px; }
.combo select { appearance: none; display: block; width: 100%; height: 100%; margin: 0; padding: 0 18px 0 4px; border: 1px solid var(--edge); border-radius: 0; background: #fff; font: inherit; color: #000; }
.combo .after-box { padding-left: 19px; }
.combo .after-long { padding-left: 69px; }
.combo .after-short { padding-left: 44px; }
.combo .after-layer { padding-left: 84px; border-right: 0; }
.wide { width: 151px; }
.wider { width: 161px; }
.medium { width: 125px; }
.narrow { width: 100px; }
.grow { flex: 1; }
.combo.off select { background: var(--face); border-color: #c9c7ba; border-right: 0; color: #aca899; padding-left: 10px; opacity: 1; }
.arrow { position: absolute; top: 2px; right: 2px; bottom: 2px; width: 15px; display: flex; align-items: center; justify-content: center; border-radius: 2px; background: linear-gradient(135deg, #dce6fd, #aec8f7); border: 1px solid #c0d0f6; pointer-events: none; }
.arrow svg, .ud { width: 9px; height: 6px; }
.lr { width: 6px; height: 9px; }
.box, .stroke, .layer-state { position: absolute; pointer-events: none; }
.box { left: 6px; top: 6px; width: 10px; height: 10px; border: 1px solid #000; }
.stroke { left: 5px; top: 11px; height: 1px; background: #000; }
.stroke.long { width: 60px; }
.stroke.short { width: 35px; }
.layer-state { left: 3px; top: 3px; display: flex; gap: 1px; align-items: center; }
.chip { width: 10px; height: 10px; border: 1px solid #000; }

.work { flex: 1; min-height: 0; display: flex; overflow: hidden; }
.side { flex: none; width: 25px; padding-top: 2px; overflow: hidden; border: solid #fff; border-width: 1px 0 0 1px; border-right: 1px solid var(--shade); margin-right: 1px; }
.side button { width: 23px; height: 22px; }
.hgrip { height: 7px; margin: 0 1px 1px 2px; border: solid #fff; border-width: 2px 0; box-shadow: 0 1px var(--shade); background: linear-gradient(var(--shade) 1px, transparent 1px); }
.view { flex: 1; min-width: 0; display: flex; flex-direction: column; border: solid #716f64; border-width: 3px 0 0 3px; border-top-color: #85826f; }
.model { flex: 1; min-height: 0; display: flex; }
.canvas { flex: 1; min-width: 0; height: 100%; background: #000; }
.axis { font: 11px "Liberation Sans", Arial, sans-serif; fill: #fff; }

.vscroll { flex: none; width: 20px; padding: 1px 4px 1px 1px; display: flex; flex-direction: column; background: linear-gradient(90deg, #f0efe8, #fefefb 16px, var(--face) 17px); }
.sb { flex: none; width: 15px; height: 15px; border: 1px solid #fff; border-radius: 2px; background: linear-gradient(135deg, #dbe6fe, #b4cbf8); box-shadow: 0 1px #8faee0; }
.thumb { background: repeating-linear-gradient(#8aa8e4 0 1px, transparent 1px 2px) center / 7px 7px no-repeat, #c4d5fc; }
.thumb.across { background: repeating-linear-gradient(90deg, #8aa8e4 0 1px, transparent 1px 2px) center / 7px 7px no-repeat, #c4d5fc; }
.before { flex: 2; }
.after { flex: 13; }
.hscroll { display: flex; background: #f5f4ec; }
.long-run { flex: 5; }
.short-run { flex: 3; }

.tabs { flex: none; height: 10px; overflow: hidden; display: flex; align-items: flex-start; padding-right: 20px; }
.nav { width: 18px; height: 14px; border: 1px solid #fff; border-right-color: var(--shade); }
.nav svg { width: 12px; height: 12px; }
.tab { position: relative; height: 16px; padding: 0 6px; line-height: 14px; }
.tab::after { content: ""; position: absolute; right: 0; top: 0; width: 2px; height: 16px; background: #333; transform: skewX(-16deg); }
.tab.on { background: #000; color: #fff; padding: 0 6px 0 11px; clip-path: polygon(3px 0, 100% 0, calc(100% - 5px) 100%, 8px 100%); }
.tabs .hscroll { width: 165px; margin-left: auto; padding-left: 6px; border-left: 1px solid var(--shade); }

.command { flex: none; height: 65px; margin-top: 7px; padding: 5px 8px 0 5px; display: flex; border-top: 1px solid #000; box-shadow: 0 -1px var(--shade), 0 -5px var(--face), 0 -7px #fff; }
.grip.tall { height: 52px; margin: 3px 4px 0 1px; }
.console { flex: 1; min-width: 0; }
.history { display: flex; height: 42px; border: solid #000; border-width: 2px 0 0 1px; border-bottom: 1px solid var(--shade); background: #fff; }
.history pre { flex: 1; margin: 0; padding-left: 1px; font: 13px/13px "Liberation Mono", "Courier New", monospace; }
.history .vscroll { width: 16px; padding: 0 1px 1px 0; }
.entry { display: flex; height: 16px; padding-right: 17px; border-left: 1px solid #000; }
.entry input { flex: 1; min-width: 0; margin: 0; padding: 0 0 0 1px; border: 0; background: #fff; font: 13px/16px "Liberation Mono", "Courier New", monospace; }
.entry .hscroll { width: 70px; padding: 0 1px; gap: 2px; }

.status { flex: none; height: 23px; display: flex; align-items: center; gap: 4px; padding: 2px 0 0 5px; border-top: 2px solid var(--shade); box-shadow: inset 0 1px #fff; }
.status output { flex: 1; height: 18px; padding: 1px 2px; line-height: 16px; border: 1px solid var(--shade); border-right-color: #fff; border-bottom-color: #fff; white-space: nowrap; }
.status button { height: 18px; border: 1px solid #fff; border-right-color: var(--shade); border-bottom-color: var(--shade); }
.status .on { border-color: #000 #fff #fff #000; background: #f5f4ee; }
.tray { display: flex; justify-content: center; width: 24px; height: 18px; border: 1px solid var(--shade); border-right-color: #fff; border-bottom-color: #fff; }
.status .dark { border: 0; width: 14px; }
.dark::before { border-width: 4px 4px 0; border-top-color: #000; }
.size { width: 12px; height: 12px; }
```
